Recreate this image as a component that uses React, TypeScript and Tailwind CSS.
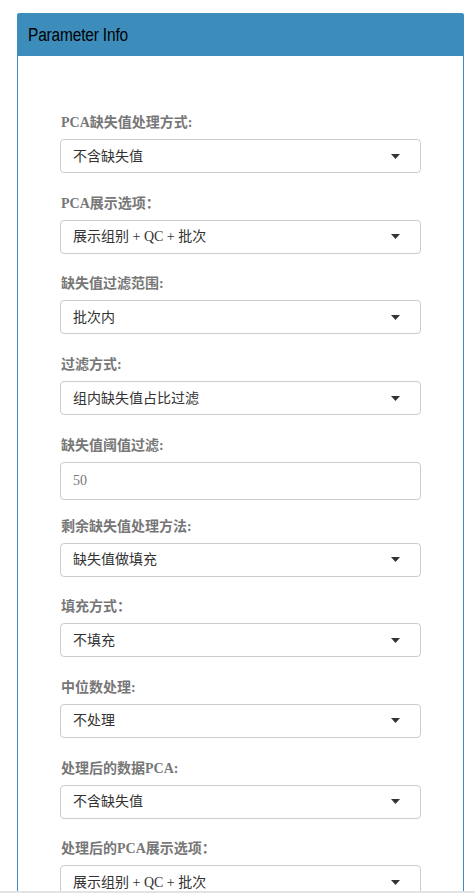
import React from 'react';

type Field = { label: string; value: string; kind?: 'select' | 'input' };

const fields: Field[] = [
  { label: 'PCA缺失值处理方式:', value: '不含缺失值' },
  { label: 'PCA展示选项：', value: '展示组别 + QC + 批次' },
  { label: '缺失值过滤范围:', value: '批次内' },
  { label: '过滤方式:', value: '组内缺失值占比过滤' },
  { label: '缺失值阈值过滤:', value: '50', kind: 'input' },
  { label: '剩余缺失值处理方法:', value: '缺失值做填充' },
  { label: '填充方式：', value: '不填充' },
  { label: '中位数处理:', value: '不处理' },
  { label: '处理后的数据PCA:', value: '不含缺失值' },
  { label: '处理后的PCA展示选项：', value: '展示组别 + QC + 批次' },
];

function Caret() {
  return (
    <svg width="9" height="5" viewBox="0 0 9 5" className="shrink-0">
      <path d="M0 0 H9 L4.5 5 Z" fill="#333" />
    </svg>
  );
}

export default function App() {
  return (
    <div className="min-h-screen w-full bg-white pt-[13px] pl-[17px] pr-[11px]">
      <div className="w-[447px] rounded-t-[3px] border-x border-[#3c8dbc]">
        {/* Panel header */}
        <div className="h-[43px] -mx-px bg-[#3c8dbc] rounded-t-[3px] flex items-center pl-[11px]">
          <h3
            className="text-[18px] text-black leading-none origin-left scale-x-[0.86] tracking-[-0.2px]"
            style={{ fontFamily: '"Liberation Sans", Arial, sans-serif' }}
          >
            Parameter Info
          </h3>
        </div>

        {/* Panel body */}
        <div className="px-[42px] pt-[57px] pb-10">
          {fields.map((f) => (
            <div key={f.label} className={f.kind === 'input' ? 'mb-[16.8px]' : 'mb-[20.7px]'}>
              <label
                className="block h-[20px] leading-[20px] mb-[6px] text-[14px] font-bold text-[#777] pl-px"
                style={{ fontFamily: '"Liberation Serif", "Noto Sans CJK SC", serif' }}
              >
                {f.label}
              </label>
              {f.kind === 'input' ? (
                <div
                  className="h-[38px] w-[361px] rounded-[4px] border border-[#ccc] flex items-center px-3 text-[14px] text-[#777]"
                  style={{ fontFamily: '"Liberation Serif", "Noto Sans CJK SC", serif' }}
                >
                  {f.value}
                </div>
              ) : (
                <div className="h-[34px] w-[361px] rounded-[4px] border border-[#ccc] flex items-center justify-between pl-3 pr-[20px]">
                  <span
                    className="text-[14px] text-[#333]"
                    style={{ fontFamily: '"Liberation Serif", "Noto Sans CJK SC", serif' }}
                  >
                    {f.value}
                  </span>
                  <Caret />
                </div>
              )}
            </div>
          ))}
        </div>
      </div>

      {/* bottom scrollbar edge */}
      <div className="fixed left-0 right-0 bottom-0 h-[2px] bg-[#e3e3e3]" />
    </div>
  );
}
